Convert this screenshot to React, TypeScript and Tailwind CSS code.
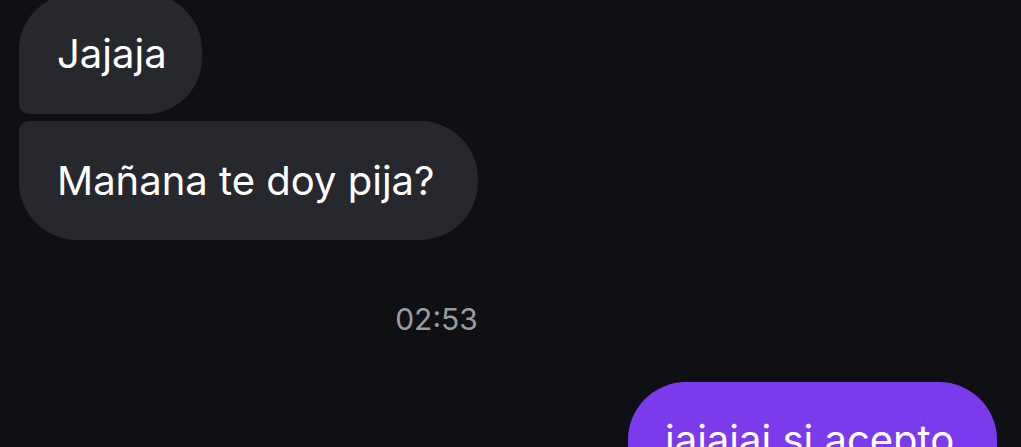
export default function App() {
  return (
    <div
      className="h-[447px] w-full overflow-hidden bg-[#0e1014] text-white"
      style={{ fontFamily: 'Inter, "Noto Sans", sans-serif' }}
    >
      <div className="-mt-[6px] flex flex-col px-[19px]">
        <div className="flex h-[120px] w-fit items-center rounded-[56px] rounded-bl-[10px] bg-[#26282d] pl-[38px] pr-[35px] text-[40px] leading-none">
          Jajaja
        </div>
        <div className="mt-[7px] flex h-[119px] w-fit items-center rounded-[58px] rounded-tl-[10px] bg-[#26282d] pl-[38px] pr-[43px] text-[40px] leading-none">
          Mañana te doy pija?
        </div>
        <div className="mt-[64px] w-[835px] text-center text-[30px] leading-none text-[#9a9ca3]">
          02:53
        </div>
        <div className="mt-[48px] flex justify-end pr-[5px]">
          <div className="flex h-[119px] w-[369px] items-center rounded-[58px] rounded-br-[10px] bg-[#7c3aed] pl-[37px] pb-[4px] text-[40px] leading-none">
            jajajai si acepto
          </div>
        </div>
      </div>
    </div>
  );
}
